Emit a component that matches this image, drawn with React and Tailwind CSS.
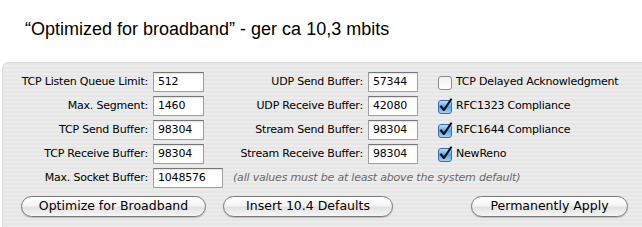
import React from "react";

function Field({ value, w = "w-[51px]" }) {
  return (
    <div className={`${w} h-[20px] bg-white border border-[#a0a0a0] border-t-[#777777] shadow-[inset_0_1px_1px_rgba(0,0,0,0.12)] pl-[4px] flex items-center text-[11px] text-black`}>
      {value}
    </div>
  );
}

function Check({ on }) {
  return (
    <svg width="16" height="16" viewBox="0 0 16 16" className="shrink-0">
      <defs>
        <linearGradient id="cbOn" x1="0" y1="0" x2="0" y2="1">
          <stop offset="0" stopColor="#c4e2fb" />
          <stop offset="0.5" stopColor="#5aa5ea" />
          <stop offset="1" stopColor="#a6d4f9" />
        </linearGradient>
        <linearGradient id="cbOff" x1="0" y1="0" x2="0" y2="1">
          <stop offset="0" stopColor="#f0f0f0" />
          <stop offset="1" stopColor="#ffffff" />
        </linearGradient>
      </defs>
      <rect x="1.5" y="2.5" width="13" height="13" rx="2.5" fill={on ? "url(#cbOn)" : "url(#cbOff)"} stroke={on ? "#3a6fa8" : "#8c8c8c"} />
      {on && <path d="M4 8.5 L7 12 L14 1.5" fill="none" stroke="#111" strokeWidth="2.2" strokeLinecap="round" strokeLinejoin="round" />}
    </svg>
  );
}

function Button({ children, w }) {
  return (
    <div className={`${w} h-[21px] rounded-full border border-[#7a7a7a] bg-[linear-gradient(#ffffff,#f4f4f4_45%,#e2e2e2_55%,#f6f6f6)] shadow-[0_1px_1px_rgba(0,0,0,0.2)] flex items-center justify-center text-[12.5px] text-black`}>
      {children}
    </div>
  );
}

const rows = [
  ["TCP Listen Queue Limit:", "512", "UDP Send Buffer:", "57344", false, "TCP Delayed Acknowledgment"],
  ["Max. Segment:", "1460", "UDP Receive Buffer:", "42080", true, "RFC1323 Compliance"],
  ["TCP Send Buffer:", "98304", "Stream Send Buffer:", "98304", true, "RFC1644 Compliance"],
  ["TCP Receive Buffer:", "98304", "Stream Receive Buffer:", "98304", true, "NewReno"],
];

export default function App() {
  return (
    <div className="w-[642px] h-[227px] bg-white overflow-hidden">
      <div className="h-[62px] pl-[25px] pt-[18px] font-['Liberation_Sans',Arial,sans-serif] text-[18px] leading-[22px] text-black">
        “Optimized for broadband” - ger ca 10,3 mbits
      </div>
      <div className="ml-[2px] h-[165px] rounded-tl-[6px] border-t border-l border-[#dcdcdc] bg-[repeating-linear-gradient(0deg,#ececec_0px,#ececec_2px,#e6e6e6_2px,#e6e6e6_4px)] pt-[7px] font-['DejaVu_Sans',sans-serif] text-[11px] tracking-[-0.2px] text-black">
        {rows.map((r) => (
          <div key={r[0]} className="flex items-center h-[24px]">
            <span className="w-[145px] text-right">{r[0]}</span>
            <div className="ml-[5px]"><Field value={r[1]} /></div>
            <span className="w-[159px] text-right">{r[2]}</span>
            <div className="ml-[5px]"><Field value={r[3]} w="w-[50px]" /></div>
            <div className="ml-[19px] flex items-center gap-[3px]">
              <Check on={r[4]} />
              <span>{r[5]}</span>
            </div>
          </div>
        ))}
        <div className="flex items-center h-[24px]">
          <span className="w-[145px] text-right">Max. Socket Buffer:</span>
          <div className="ml-[5px]"><Field value="1048576" w="w-[70px]" /></div>
          <span className="ml-[10px] italic text-[#6a6a6a]">(all values must be at least above the system default)</span>
        </div>
        <div className="flex items-center mt-[6px] tracking-normal">
          <div className="ml-[18px]"><Button w="w-[185px]">Optimize for Broadband</Button></div>
          <div className="ml-[17px]"><Button w="w-[170px]">Insert 10.4 Defaults</Button></div>
          <div className="ml-[78px]"><Button w="w-[157px]">Permanently Apply</Button></div>
        </div>
      </div>
    </div>
  );
}
